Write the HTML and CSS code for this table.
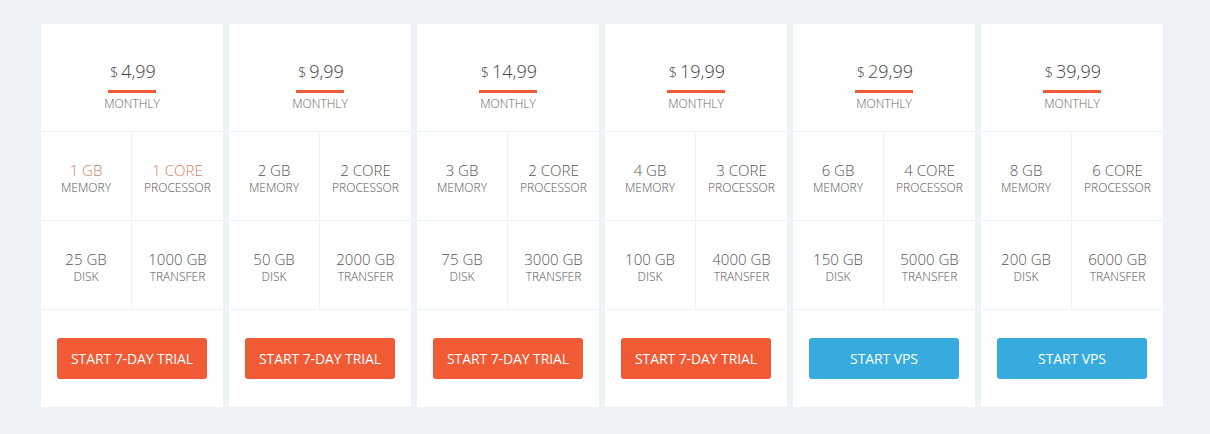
FILE: index.html
```html
<!DOCTYPE html>
<html lang="en">
<head>
<meta charset="utf-8">
<title>VPS Plans</title>
<link rel="stylesheet" href="styles.css">
</head>
<body>
<main class="plans">
  <section class="plan">
    <div class="plan-head">
      <div class="price"><span class="cur">$</span> <span class="amt">4,99</span></div>
      <div class="period">MONTHLY</div>
    </div>
    <div class="specs">
      <div class="spec hl"><span class="val">1 GB</span><span class="lbl">MEMORY</span></div>
      <div class="spec hl"><span class="val">1 CORE</span><span class="lbl">PROCESSOR</span></div>
      <div class="spec"><span class="val">25 GB</span><span class="lbl">DISK</span></div>
      <div class="spec"><span class="val">1000 GB</span><span class="lbl">TRANSFER</span></div>
    </div>
    <div class="plan-foot"><a class="btn btn-orange" href="#">START 7-DAY TRIAL</a></div>
  </section>
  <section class="plan">
    <div class="plan-head">
      <div class="price"><span class="cur">$</span> <span class="amt">9,99</span></div>
      <div class="period">MONTHLY</div>
    </div>
    <div class="specs">
      <div class="spec"><span class="val">2 GB</span><span class="lbl">MEMORY</span></div>
      <div class="spec"><span class="val">2 CORE</span><span class="lbl">PROCESSOR</span></div>
      <div class="spec"><span class="val">50 GB</span><span class="lbl">DISK</span></div>
      <div class="spec"><span class="val">2000 GB</span><span class="lbl">TRANSFER</span></div>
    </div>
    <div class="plan-foot"><a class="btn btn-orange" href="#">START 7-DAY TRIAL</a></div>
  </section>
  <section class="plan">
    <div class="plan-head">
      <div class="price"><span class="cur">$</span> <span class="amt">14,99</span></div>
      <div class="period">MONTHLY</div>
    </div>
    <div class="specs">
      <div class="spec"><span class="val">3 GB</span><span class="lbl">MEMORY</span></div>
      <div class="spec"><span class="val">2 CORE</span><span class="lbl">PROCESSOR</span></div>
      <div class="spec"><span class="val">75 GB</span><span class="lbl">DISK</span></div>
      <div class="spec"><span class="val">3000 GB</span><span class="lbl">TRANSFER</span></div>
    </div>
    <div class="plan-foot"><a class="btn btn-orange" href="#">START 7-DAY TRIAL</a></div>
  </section>
  <section class="plan">
    <div class="plan-head">
      <div class="price"><span class="cur">$</span> <span class="amt">19,99</span></div>
      <div class="period">MONTHLY</div>
    </div>
    <div class="specs">
      <div class="spec"><span class="val">4 GB</span><span class="lbl">MEMORY</span></div>
      <div class="spec"><span class="val">3 CORE</span><span class="lbl">PROCESSOR</span></div>
      <div class="spec"><span class="val">100 GB</span><span class="lbl">DISK</span></div>
      <div class="spec"><span class="val">4000 GB</span><span class="lbl">TRANSFER</span></div>
    </div>
    <div class="plan-foot"><a class="btn btn-orange" href="#">START 7-DAY TRIAL</a></div>
  </section>
  <section class="plan">
    <div class="plan-head">
      <div class="price"><span class="cur">$</span> <span class="amt">29,99</span></div>
      <div class="period">MONTHLY</div>
    </div>
    <div class="specs">
      <div class="spec"><span class="val">6 GB</span><span class="lbl">MEMORY</span></div>
      <div class="spec"><span class="val">4 CORE</span><span class="lbl">PROCESSOR</span></div>
      <div class="spec"><span class="val">150 GB</span><span class="lbl">DISK</span></div>
      <div class="spec"><span class="val">5000 GB</span><span class="lbl">TRANSFER</span></div>
    </div>
    <div class="plan-foot"><a class="btn btn-blue" href="#">START VPS</a></div>
  </section>
  <section class="plan">
    <div class="plan-head">
      <div class="price"><span class="cur">$</span> <span class="amt">39,99</span></div>
      <div class="period">MONTHLY</div>
    </div>
    <div class="specs">
      <div class="spec"><span class="val">8 GB</span><span class="lbl">MEMORY</span></div>
      <div class="spec"><span class="val">6 CORE</span><span class="lbl">PROCESSOR</span></div>
      <div class="spec"><span class="val">200 GB</span><span class="lbl">DISK</span></div>
      <div class="spec"><span class="val">6000 GB</span><span class="lbl">TRANSFER</span></div>
    </div>
    <div class="plan-foot"><a class="btn btn-blue" href="#">START VPS</a></div>
  </section>
</main>
</body>
</html>
```

FILE: styles.css
```css
* { box-sizing: border-box; }
html, body { margin: 0; }
body {
  background: #edf2f7;
  font-family: "Open Sans", "Noto Sans", "Liberation Sans", sans-serif;
  color: #555;
  width: 1210px;
  height: 434px;
  overflow: hidden;
}
.plans {
  display: grid;
  grid-template-columns: repeat(6, 182px);
  column-gap: 6px;
  padding: 24px 0 0 41px;
}
.plan {
  background: #fff;
  display: flex;
  flex-direction: column;
  height: 383px;
}
.plan-head {
  height: 108px;
  border-bottom: 1px solid #eef2f6;
  display: flex;
  flex-direction: column;
  align-items: center;
  padding-top: 35px;
}
.price {
  display: inline-flex;
  align-items: baseline;
  gap: 3px;
  line-height: 24px;
  padding: 0 0 5px 2px;
  border-bottom: 3px solid #f05a35;
  font-weight: 300;
  color: #444;
}
.cur { font-size: 14px; }
.amt { font-size: 18px; }
.period {
  margin-top: 3px;
  font-size: 12px;
  line-height: 16px;
  color: #666;
  font-weight: 300;
}
.specs {
  display: grid;
  grid-template-columns: 91px 91px;
}
.spec {
  height: 89px;
  border-bottom: 1px solid #eef2f6;
  display: flex;
  flex-direction: column;
  align-items: center;
  justify-content: center;
  padding-top: 4px;
}
.spec:nth-child(odd) { border-right: 1px solid #eef2f6; }
.val {
  font-size: 15px;
  line-height: 18px;
  font-weight: 300;
  color: #555;
}
.lbl {
  margin-top: 2px;
  font-size: 12px;
  line-height: 14px;
  font-weight: 300;
  color: #555;
}
.spec.hl .val { color: #cf8462; }
.plan-foot {
  flex: 1;
  display: flex;
  align-items: center;
  justify-content: center;
}
.btn {
  display: flex;
  align-items: center;
  justify-content: center;
  width: 150px;
  height: 41px;
  border-radius: 3px;
  color: #fff;
  text-decoration: none;
  font-size: 14px;
  letter-spacing: -0.1px;
}
.btn-orange { background: #f05a35; }
.btn-blue { background: #37aade; }
```
